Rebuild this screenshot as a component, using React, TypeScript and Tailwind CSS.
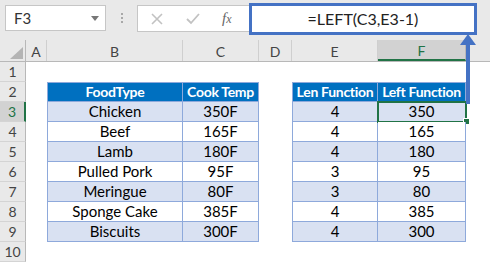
import React from "react";

const ROWS = [
  ["Chicken", "350F", "4", "350"],
  ["Beef", "165F", "4", "165"],
  ["Lamb", "180F", "4", "180"],
  ["Pulled Pork", "95F", "3", "95"],
  ["Meringue", "80F", "3", "80"],
  ["Sponge Cake", "385F", "4", "385"],
  ["Biscuits", "300F", "4", "300"],
];

const COLS = [
  { name: "A", w: "w-[21px]" },
  { name: "B", w: "w-[136px]" },
  { name: "C", w: "w-[76px]" },
  { name: "D", w: "w-[33px]" },
  { name: "E", w: "w-[86px]" },
  { name: "F", w: "w-[88px]" },
];

const RowHead = ({ n, active }: { n: number; active?: boolean }) => (
  <div
    className={`w-[26px] h-[20px] shrink-0 box-border flex items-center justify-center border-b border-[#d4d4d4] text-[14px] ${
      active
        ? "bg-[#d2d2d2] text-[#217346] border-r-2 border-r-[#217346]"
        : "bg-[#e9e9e9] text-[#444] border-r border-r-[#b8b8b8]"
    }`}
  >
    {n}
  </div>
);

const Blank = ({ w }: { w: string }) => <div className={`${w} h-[20px] shrink-0`} />;

const Cell = ({
  w,
  text,
  head,
  band,
  first,
}: {
  w: string;
  text: string;
  head?: boolean;
  band?: boolean;
  first?: boolean;
}) => (
  <div
    className={`${w} h-[20px] shrink-0 box-border flex items-center justify-center whitespace-nowrap border-r border-b border-[#8ea9db] leading-none ${
      first ? "border-l" : ""
    } ${
      head
        ? "border-t bg-[#0070c0] text-white font-bold text-[14px] tracking-[-0.3px]"
        : band
        ? "bg-[#d9e1f2] text-black text-[15px]"
        : "bg-white text-black text-[15px]"
    }`}
  >
    {text}
  </div>
);

export default function App() {
  return (
    <div className="relative w-[490px] h-[262px] overflow-hidden bg-white font-['Lato','Open_Sans',sans-serif]">
      {/* formula bar */}
      <div className="flex h-[40px] bg-[#e9e9e9]">
        <div className="ml-[5px] mt-[5px] w-[101px] h-[26px] box-border bg-white border border-[#c6c6c6] flex items-center justify-between pl-[8px] pr-[6px]">
          <span className="text-[15px] text-[#333]">F3</span>
          <span className="w-0 h-0 border-l-[4px] border-r-[4px] border-t-[5px] border-l-transparent border-r-transparent border-t-[#777]" />
        </div>
        <div className="w-[31px] flex flex-col items-center justify-center gap-[2px] pb-[4px]">
          <span className="w-[2px] h-[2px] bg-[#a8a8a8]" />
          <span className="w-[2px] h-[2px] bg-[#a8a8a8]" />
          <span className="w-[2px] h-[2px] bg-[#a8a8a8]" />
        </div>
        <div className="mt-[5px] w-[113px] h-[27px] box-border bg-white border border-[#c6c6c6] flex items-center pl-[13px]">
          <svg width="12" height="12" viewBox="0 0 12 12">
            <path d="M1 1 L11 11 M11 1 L1 11" stroke="#c2c2c2" strokeWidth="1.6" />
          </svg>
          <svg width="14" height="12" viewBox="0 0 14 12" className="ml-[23px]">
            <path d="M1 6 L5 10 L13 1" stroke="#c2c2c2" strokeWidth="1.8" fill="none" />
          </svg>
          <span className="ml-[22px] font-['Liberation_Serif',serif] italic text-[15px] text-[#666]">
            f<span className="text-[12px]">x</span>
          </span>
        </div>
        <div className="-ml-[1px] mt-[3px] w-[228px] h-[32px] box-border bg-white border-[3px] border-[#4472c4] flex items-center justify-center text-[16px] text-[#222]">
          =LEFT(C3,E3-1)
        </div>
      </div>

      {/* column headers */}
      <div className="flex h-[22px] bg-[#e9e9e9] border-b border-[#b8b8b8] box-border">
        <div className="relative w-[26px] shrink-0 border-r border-[#b8b8b8]">
          <svg className="absolute left-[10px] top-[7px]" width="13" height="12" viewBox="0 0 13 12">
            <polygon points="13,0 13,12 0,12" fill="#b4b4b4" />
          </svg>
        </div>
        {COLS.map((c) => (
          <div
            key={c.name}
            className={`${c.w} shrink-0 box-border flex items-center justify-center text-[14px] pt-[2px] ${
              c.name === "F"
                ? "bg-[#d2d2d2] text-[#217346] border-b-2 border-[#217346] border-r border-r-[#b8b8b8]"
                : "text-[#444] border-r border-[#cfcfcf]"
            }`}
          >
            {c.name}
          </div>
        ))}
        <div className="flex-1" />
      </div>

      {/* row 1 */}
      <div className="flex">
        <RowHead n={1} />
      </div>
      {/* row 2 header */}
      <div className="flex">
        <RowHead n={2} />
        <Blank w="w-[21px]" />
        <Cell w="w-[136px]" text="FoodType" head first />
        <Cell w="w-[76px]" text="Cook Temp" head />
        <Blank w="w-[33px]" />
        <Cell w="w-[86px]" text="Len Function" head first />
        <Cell w="w-[88px]" text="Left Function" head />
      </div>
      {ROWS.map((r, i) => (
        <div key={i} className="flex">
          <RowHead n={i + 3} active={i === 0} />
          <Blank w="w-[21px]" />
          <Cell w="w-[136px]" text={r[0]} band={i % 2 === 0} first />
          <Cell w="w-[76px]" text={r[1]} band={i % 2 === 0} />
          <Blank w="w-[33px]" />
          <Cell w="w-[86px]" text={r[2]} band={i % 2 === 0} first />
          <div className="relative">
            <Cell w="w-[88px]" text={r[3]} band={i % 2 === 0} />
            {i === 0 && (
              <>
                <div className="absolute -left-[1px] -top-[1px] w-[90px] h-[22px] border-2 border-[#217346]" />
                <div className="absolute left-[85px] top-[16px] w-[7px] h-[7px] bg-[#217346] border border-white" />
              </>
            )}
          </div>
        </div>
      ))}
      <div className="flex">
        <RowHead n={10} />
      </div>

      {/* annotation arrow */}
      <svg className="absolute left-[458px] top-[34px]" width="20" height="70" viewBox="0 0 20 70">
        <polygon points="10,0 2,11 18,11" fill="#4472c4" />
        <rect x="8" y="10" width="4" height="60" fill="#4472c4" />
      </svg>
    </div>
  );
}
